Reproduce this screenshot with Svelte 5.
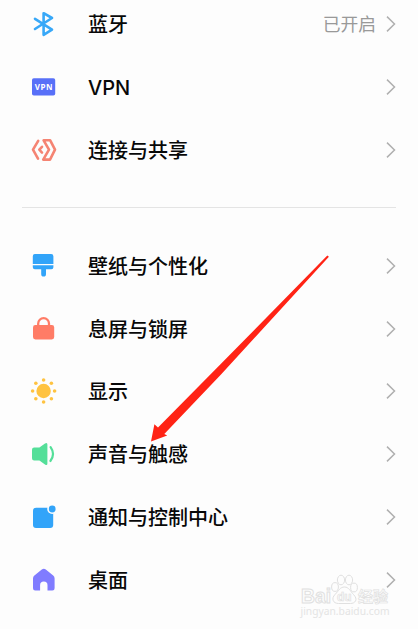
<script>
  const connections = [
    { icon: 'bluetooth', label: '蓝牙', value: '已开启' },
    { icon: 'vpn', label: 'VPN' },
    { icon: 'share', label: '连接与共享' }
  ];
  const device = [
    { icon: 'brush', label: '壁纸与个性化' },
    { icon: 'lock', label: '息屏与锁屏' },
    { icon: 'sun', label: '显示' },
    { icon: 'sound', label: '声音与触感' },
    { icon: 'notice', label: '通知与控制中心' },
    { icon: 'home', label: '桌面' }
  ];
  const rays = [0, 45, 90, 135, 180, 225, 270, 315].map((d) => {
    const a = (d * Math.PI) / 180;
    return { x: 15.6 + 11 * Math.cos(a), y: 16 + 11 * Math.sin(a) };
  });
</script>

{#snippet glyph(name)}
  <svg class="icon" viewBox="0 0 32 32" aria-hidden="true">
    {#if name === 'bluetooth'}
      <path class="line blue" d="M7 10.8 24 21.6 15.6 26.8V5.2L24 10 7 21" />
    {:else if name === 'vpn'}
      <rect x="4" y="7.2" width="23.2" height="17.4" rx="1.8" fill="#5870f8" />
      <text class="vpn" x="15.9" y="19" text-anchor="middle">VPN</text>
    {:else if name === 'share'}
      <path class="line coral" d="M10.2 6.8 5 15.6 10 24.6M15.6 6.3h6.6L27 15.7 22 25.6h-6.8L21 15.7zM14 12.8l-2.7 2.9 2.7 2.9" />
    {:else if name === 'brush'}
      <path fill="#32a4f9" d="M6.8 4h16.4q2.2 0 2.2 2.2v7.8H4.8V6.2q0-2.2 2-2.2zM4.8 15.2h20.6v2q0 2-2 2H18V24q0 2.6-2.4 2.6T13.2 24v-4.8H6.8q-2 0-2-2z" />
    {:else if name === 'lock'}
      <path fill="none" stroke="#ff7c66" stroke-width="2.3" d="M10.2 14V10.6a5.4 5.4 0 0 1 10.8 0V14" />
      <rect x="5" y="12" width="21.2" height="14.4" rx="2.4" fill="#ff7c66" />
    {:else if name === 'sun'}
      <circle cx="15.6" cy="16" r="7.2" fill="#ffc341" />
      {#each rays as r}<circle cx={r.x} cy={r.y} r="1.8" fill="#ffc341" />{/each}
    {:else if name === 'sound'}
      <path fill="#54df99" d="M6.2 9.6h5.2l5.6-4.2q2.4-1.4 2.4 1v19.2q0 2.4-2.4 1l-5.6-4.2H6.2Q4 22.4 4 20.2v-8.4q0-2.2 2.2-2.2z" />
      <path fill="none" stroke="#54df99" stroke-width="2.2" stroke-linecap="round" d="M22.6 9.2q5 7-.2 13.8" />
    {:else if name === 'notice'}
      <rect x="5" y="6.7" width="20.2" height="20.4" rx="3" fill="#32a4f9" />
      <circle cx="24.2" cy="8" r="5" fill="#fdfdfd" />
      <circle cx="24.2" cy="8" r="3.4" fill="#32a4f9" />
    {:else if name === 'home'}
      <path fill="#807cff" d="M13.8 5.4q2-1.4 4 0l7.4 6.1q1.4 1.2 1.4 3v9.8q0 2.2-2.2 2.2h-4.9v-5.3a3.7 3.7 0 0 0-7.4 0v5.3H7.2Q5 26.500 5 24.300v-9.800q0-1.800 1.400-3z" />
    {/if}
  </svg>
{/snippet}

{#snippet row(item)}
  <li class="row">
    {@render glyph(item.icon)}
    <span class="label">{item.label}</span>
    {#if item.value}<span class="value">{item.value}</span>{/if}
    <svg class="chevron" viewBox="0 0 12 18" aria-hidden="true"><path d="M2 1.6l7.5 7.400-7.500 7.400" /></svg>
  </li>
{/snippet}

<main>
  <ul>{#each connections as item}{@render row(item)}{/each}</ul>
  <hr />
  <ul>{#each device as item}{@render row(item)}{/each}</ul>

  <svg class="arrow" viewBox="0 0 418 629" aria-hidden="true">
    <path fill="#ff2315" d="M327.3 255.600l1.600 1.200L221 374.500 164.300 434l2.900 1.600L151 441.500l3.400-17.300 3.600 3.300L220 364.800z" />
  </svg>

  <svg class="watermark" viewBox="0 0 100 52" aria-hidden="true">
    <text class="brand" x="3" y="33" textLength="30" lengthAdjust="spacingAndGlyphs">Bai</text>
    <g class="paw">
      <ellipse cx="37" cy="17" rx="3.4" ry="4.4" />
      <ellipse cx="43" cy="10" rx="3.6" ry="4.8" />
      <ellipse cx="51" cy="10" rx="3.6" ry="4.8" />
      <ellipse cx="56" cy="17.5" rx="3.4" ry="4.4" />
      <path d="M46.5 17c4.500 0 6 4.500 9 7.500 5 5 1.500 9-3 9h-12c-5.500 0-7.500-5-3.500-9s5-7.500 9.500-7.500z" />
    </g>
    <text class="du" x="39" y="31" textLength="14.5" lengthAdjust="spacingAndGlyphs">du</text>
    <text class="jy" x="60" y="32">经验</text>
    <text class="site" x="2.500" y="44.800" textLength="89" lengthAdjust="spacingAndGlyphs">jingyan.baidu.com</text>
  </svg>
</main>

<style>
  :global(body) { margin: 0; background: #fdfdfd; }
  main {
    position: relative;
    box-sizing: border-box;
    width: 418px;
    height: 629px;
    overflow: hidden;
    background: #fdfdfd;
    font-family: Inter, "Noto Sans CJK SC", sans-serif;
  }
  ul { list-style: none; margin: -7.4px 0 0; padding: 0; }
  .row {
    display: flex;
    align-items: center;
    height: 62.8px;
    padding: 0 21px 0 28px;
  }
  .icon { width: 32px; height: 32px; flex: none; }
  .label {
    flex: 1;
    margin-left: 28px;
    padding-top: 2px;
    font-size: 20px;
    line-height: 30px;
    font-weight: 500;
    color: #080808;
    white-space: nowrap;
  }
  .value { margin-right: 9px; padding-top: 2px; font-size: 17.8px; line-height: 26px; color: #999; }
  .chevron { width: 12px; height: 18px; flex: none; }
  .chevron path { fill: none; stroke: #b0b0b0; stroke-width: 1.5; }
  .line { fill: none; stroke-width: 2.6; stroke-linejoin: round; stroke-linecap: round; }
  .blue { stroke: #38a8f8; }
  .coral { stroke: #f58473; }
  .vpn { font: 700 8px "Noto Sans", sans-serif; letter-spacing: .5px; fill: #fff; }
  hr { height: 1px; margin: 26px 22px 0; border: 0; background: #e4e4e4; }
  hr + ul { margin-top: 26.4px; }
  .arrow { position: absolute; inset: 0; width: 418px; height: 629px; }
  .watermark { position: absolute; left: 298px; top: 570px; width: 100px; height: 52px; }
  .watermark text, .paw { fill: #fdfdfd; stroke: #e0e0e0; stroke-width: 1; }
  .watermark .brand { font: 700 20px "Liberation Sans", sans-serif; }
  .watermark .du { font: 700 12px "Liberation Sans", sans-serif; stroke-width: .7; }
  .watermark .jy { font: 700 15px "Noto Sans CJK SC", sans-serif; stroke-width: .7; }
  .watermark .site { font: 10px "Noto Sans", sans-serif; fill: #e4e4e4; stroke: none; }
</style>
